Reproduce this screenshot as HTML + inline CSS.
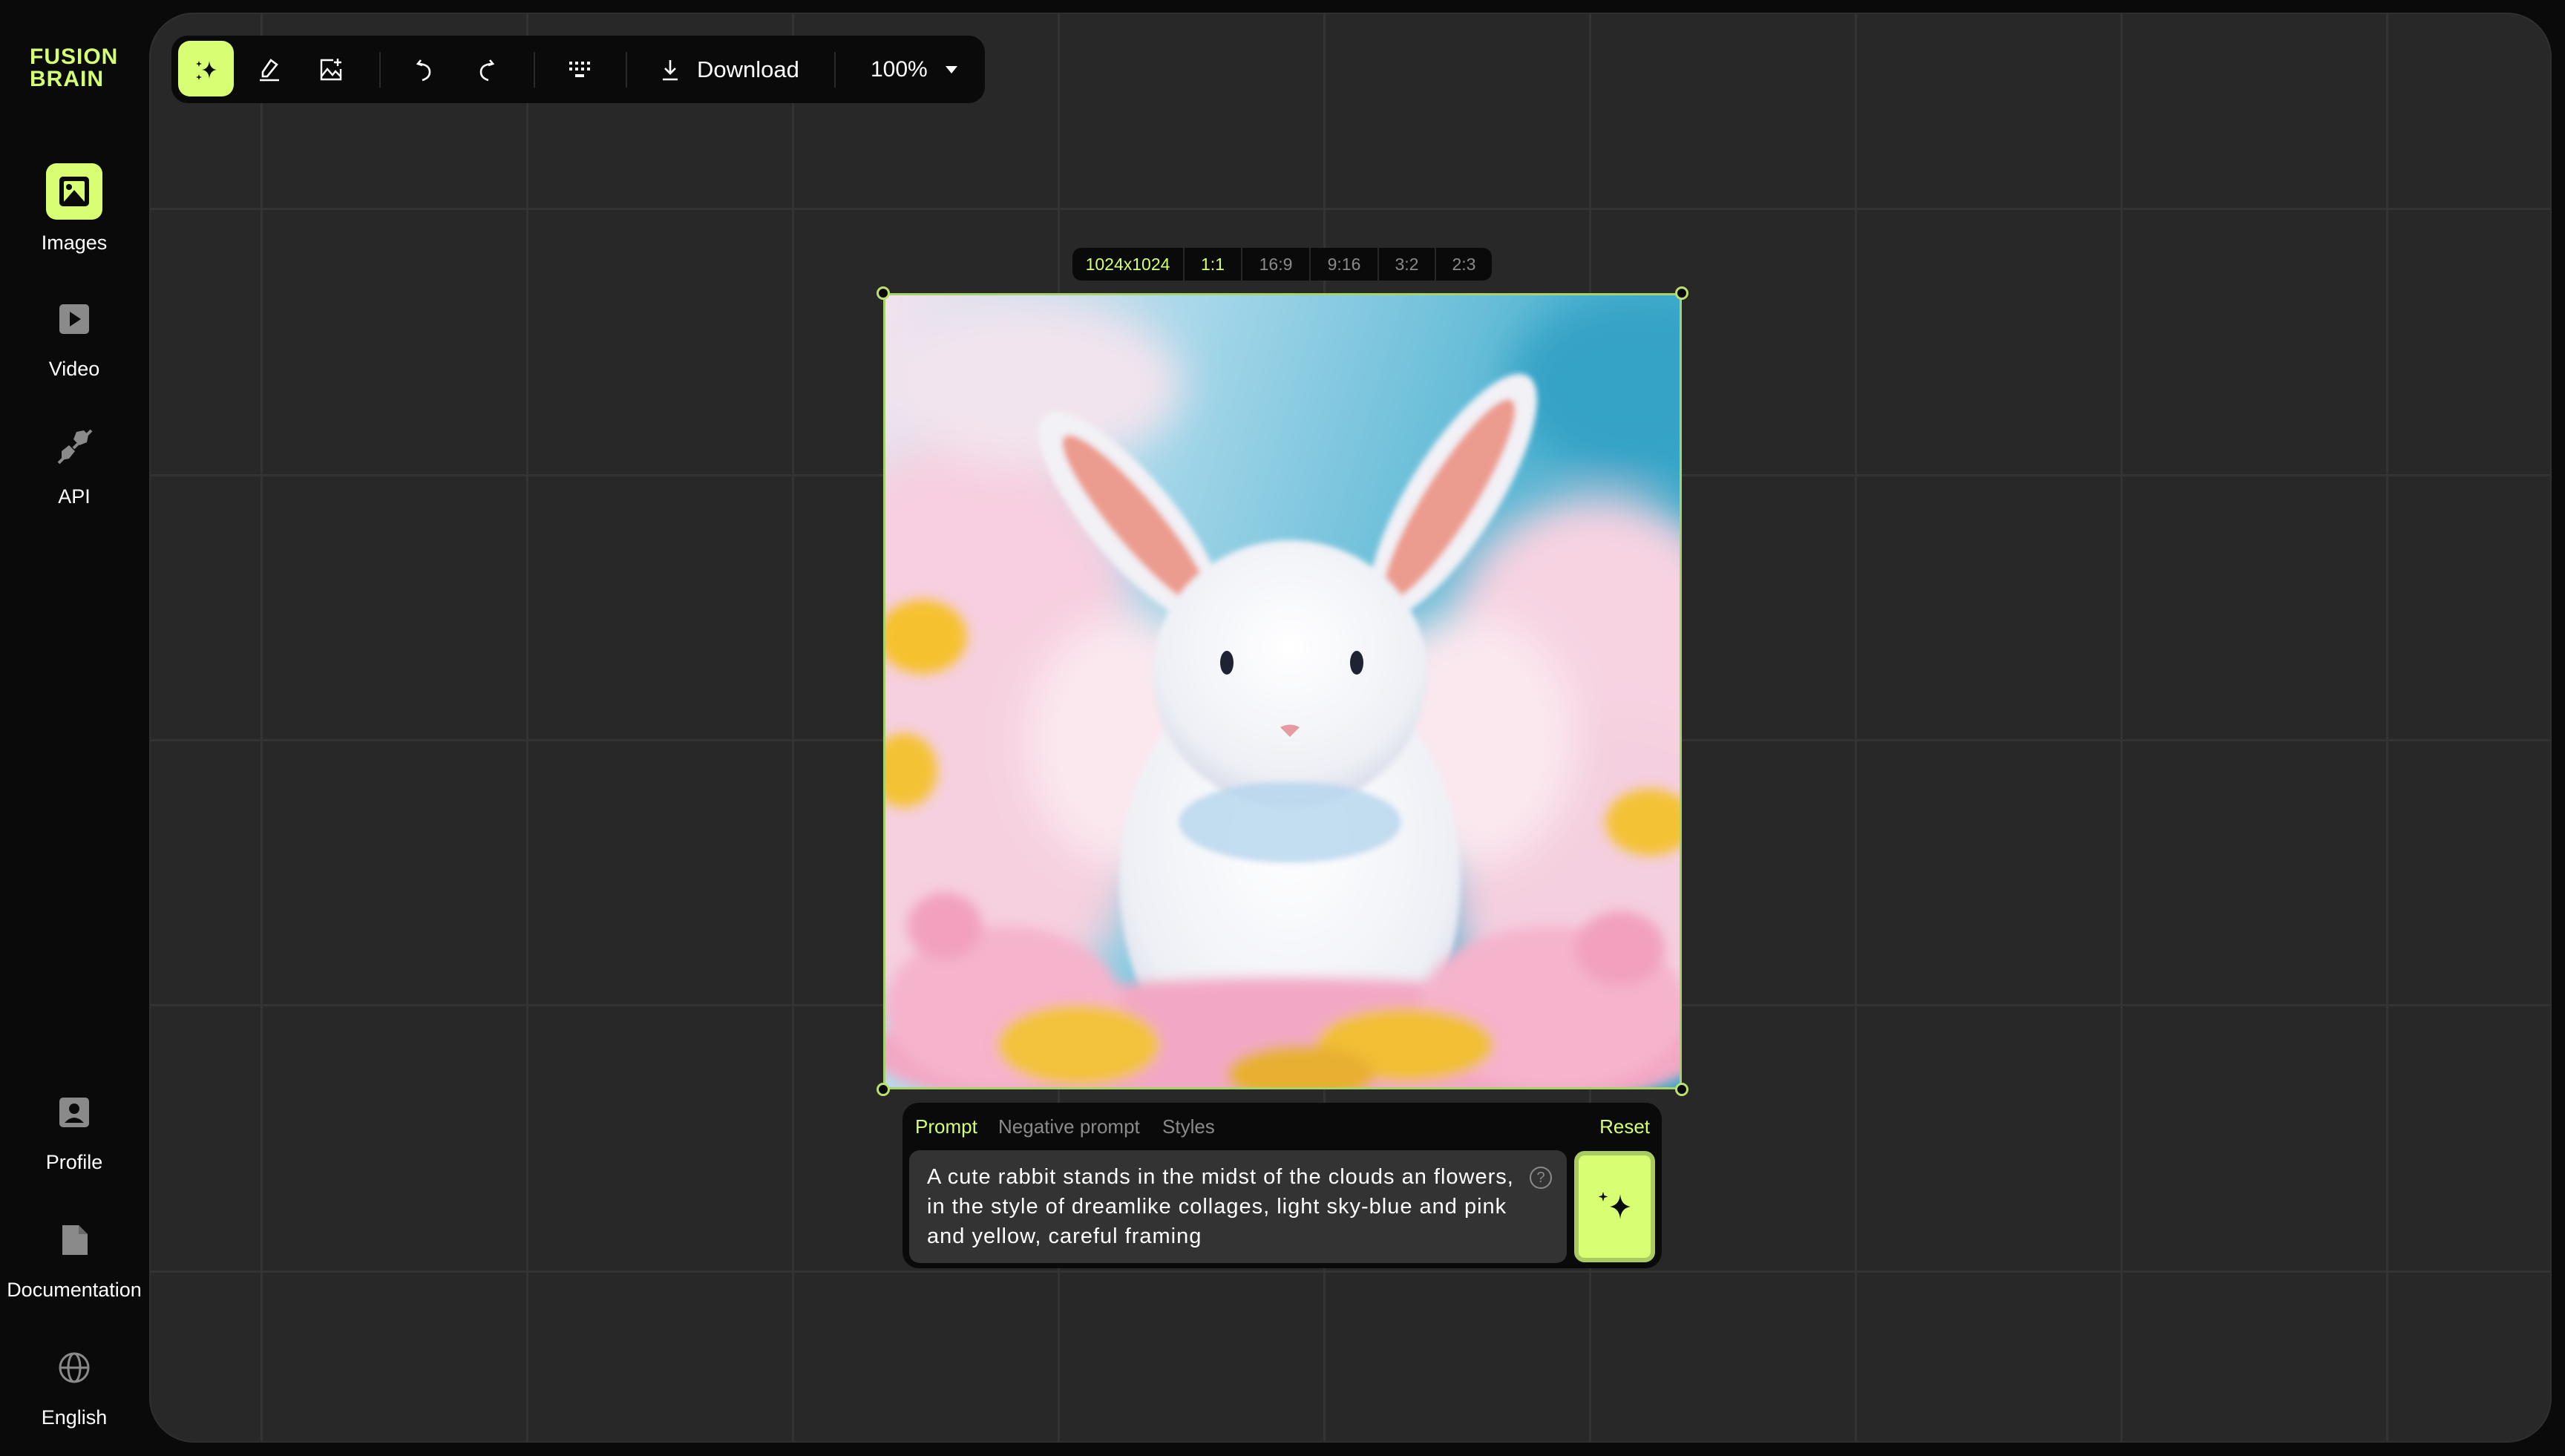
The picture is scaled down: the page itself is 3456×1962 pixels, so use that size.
<!DOCTYPE html>
<html><head><meta charset="utf-8">
<style>
*{margin:0;padding:0;box-sizing:border-box}
html,body{width:3456px;height:1962px;overflow:hidden;background:#0a0a0a;font-family:"Liberation Sans",sans-serif;color:#fff}
.panel{position:absolute;left:201px;top:17px;width:3237px;height:1927px;border-radius:60px;background-color:#282828;
background-image:linear-gradient(90deg,transparent 148px,#333 148px,#333 151px,transparent 151px);
background-size:358px 100%;background-position:0 0;overflow:hidden;border:2px solid #2f2f2f}
.hl{position:absolute;left:0;right:0;height:3px;background:#333}
.logo{position:absolute;left:40px;top:62px;color:#d4ff73;font-weight:bold;font-size:30px;line-height:30px;letter-spacing:1px}
.nav{position:absolute;left:0;width:200px;text-align:center;font-size:27px;color:#fff}
.nav svg{display:block;margin:0 auto}
.toolbar{position:absolute;left:231px;top:48px;width:1096px;height:91px;background:#0a0a0a;border-radius:22px}
.tb{position:absolute;top:0;height:91px;display:flex;align-items:center;justify-content:center}
.sep{position:absolute;top:22px;width:2px;height:48px;background:#2a2a2a}
.active{position:absolute;left:9px;top:7px;width:75px;height:75px;background:#d8ff73;border-radius:16px}
.ratio{position:absolute;left:1445px;top:334px;width:565px;height:44px;background:#0a0a0a;border-radius:12px;font-size:23px}
.ratio span{position:absolute;top:0;height:44px;line-height:44px;text-align:center;color:#8a8a8a}
.ratio i{position:absolute;top:0;width:2px;height:44px;background:#282828}
.img{position:absolute;left:1190px;top:395px;width:1076px;height:1073px;border:3px solid #a6d46a;overflow:hidden}
.h{position:absolute;width:18px;height:18px;border-radius:50%;background:#0a0a0a;border:3px solid #b9e070}
.prompt{position:absolute;left:1216px;top:1486px;width:1023px;height:223px;background:#0a0a0a;border-radius:22px}
.ta{position:absolute;left:9px;top:64px;width:886px;height:152px;background:#333;border-radius:14px}
.gen{position:absolute;left:905px;top:65px;width:109px;height:150px;background:#d8ff73;border:6px solid #a9cc62;border-radius:14px}
</style></head><body>
<div class="logo">FUSION<br>BRAIN</div>

<div class="nav" style="top:220px">
<div style="width:76px;height:76px;background:#d8ff73;border-radius:14px;margin:0 auto;position:relative">
<svg width="76" height="76" viewBox="0 0 76 76"><rect x="18" y="18" width="40" height="40" rx="5" fill="#0a0a0a"/><rect x="24" y="24" width="28" height="28" rx="2" fill="#d8ff73"/><circle cx="31" cy="32" r="4" fill="#0a0a0a"/><path d="M24 52 L38 36 L52 52 Z" fill="#0a0a0a"/></svg></div>
<div style="margin-top:16px">Images</div></div>

<div class="nav" style="top:408px">
<svg width="44" height="44" viewBox="0 0 44 44"><rect x="2" y="2" width="40" height="40" rx="5" fill="#8a8a8a"/><path d="M16 12 L31 22 L16 32Z" fill="#0a0a0a"/></svg>
<div style="margin-top:30px">Video</div></div>

<div class="nav" style="top:578px">
<svg width="50" height="48" viewBox="0 0 50 48"><path d="M28 4 l10 -2 l6 6 l-2 10 l-10 4 l-8 -8z" fill="#8a8a8a"/><path d="M8 30 l10 -8 l8 8 l-8 10 l-10 2z" fill="#8a8a8a"/><path d="M4 46 l8 -8 M40 10 l8-8 M24 26 l6-6" stroke="#8a8a8a" stroke-width="4"/></svg>
<div style="margin-top:28px">API</div></div>

<div class="nav" style="top:1477px">
<svg width="44" height="44" viewBox="0 0 44 44"><rect x="2" y="2" width="40" height="40" rx="5" fill="#8a8a8a"/><circle cx="22" cy="17" r="7" fill="#0a0a0a"/><path d="M9 36 q13 -14 26 0z" fill="#0a0a0a"/></svg>
<div style="margin-top:30px">Profile</div></div>

<div class="nav" style="top:1649px">
<svg width="40" height="44" viewBox="0 0 40 44"><path d="M4 2 H26 L38 14 V42 H4Z" fill="#8a8a8a"/><path d="M26 2 V14 H38" fill="#6a6a6a"/></svg>
<div style="margin-top:30px">Documentation</div></div>

<div class="nav" style="top:1821px">
<svg width="44" height="44" viewBox="0 0 44 44" fill="none" stroke="#8a8a8a" stroke-width="3"><circle cx="22" cy="22" r="19"/><ellipse cx="22" cy="22" rx="8" ry="19"/><path d="M3 22 H41"/></svg>
<div style="margin-top:30px">English</div></div>

<div class="panel">
<div class="hl" style="top:261px"></div><div class="hl" style="top:620px"></div><div class="hl" style="top:977px"></div><div class="hl" style="top:1334px"></div><div class="hl" style="top:1693px"></div>
</div>

<div class="toolbar">
<div class="active"></div>
<div class="tb" style="left:9px;width:75px"><svg width="36" height="36" viewBox="0 0 36 36"><path d="M22 6 Q23 17 32 18 Q23 19 22 30 Q21 19 12 18 Q21 17 22 6Z" fill="#0a0a0a"/><path d="M8 6 l1 3 l3 1 l-3 1 l-1 3 l-1 -3 l-3 -1 l3 -1z M8 24 l1 3 l3 1 l-3 1 l-1 3 l-1-3 l-3-1 l3-1z" fill="#0a0a0a"/></svg></div>
<div class="tb" style="left:104px;width:55px"><svg width="32" height="34" viewBox="0 0 32 34" fill="none" stroke="#fff" stroke-width="2.6"><path d="M18 4 L26 10 L13 26 H7 V20 Z"/><path d="M3 31 H29"/></svg></div>
<div class="tb" style="left:187px;width:55px"><svg width="32" height="34" viewBox="0 0 32 34" fill="none" stroke="#fff" stroke-width="2.4"><path d="M19 4 H3 V30 H29 V16"/><path d="M3 26 L11 16 L18 24 L22 19 L29 26"/><path d="M25 2 V12 M20 7 H30"/></svg></div>
<div class="sep" style="left:280px"></div>
<div class="tb" style="left:313px;width:55px"><svg width="26" height="34" viewBox="0 0 26 34" fill="none" stroke="#fff" stroke-width="2.6"><path d="M8 4 L4 9 L10 11"/><path d="M5 9 Q20 10 20 20 Q20 28 10 31"/></svg></div>
<div class="tb" style="left:396px;width:55px"><svg width="26" height="34" viewBox="0 0 26 34" fill="none" stroke="#fff" stroke-width="2.6"><path d="M18 4 L22 9 L16 11"/><path d="M21 9 Q6 10 6 20 Q6 28 16 31"/></svg></div>
<div class="sep" style="left:488px"></div>
<div class="tb" style="left:522px;width:55px"><svg width="32" height="26" viewBox="0 0 32 26" fill="#fff"><rect x="2" y="2" width="4" height="4"/><rect x="10" y="2" width="4" height="4"/><rect x="18" y="2" width="4" height="4"/><rect x="26" y="2" width="4" height="4"/><rect x="2" y="10" width="4" height="4"/><rect x="10" y="10" width="4" height="4"/><rect x="18" y="10" width="4" height="4"/><rect x="26" y="10" width="4" height="4"/><rect x="10" y="19" width="12" height="4"/></svg></div>
<div class="sep" style="left:612px"></div>
<div class="tb" style="left:660px;width:320px;justify-content:flex-start;font-size:31px"><svg width="24" height="32" viewBox="0 0 24 32" fill="none" stroke="#fff" stroke-width="2.6" style="margin-right:24px"><path d="M12 3 V21 M5 14 L12 21 L19 14 M2 29 H22"/></svg>Download</div>
<div class="sep" style="left:893px"></div>
<div class="tb" style="left:942px;width:150px;justify-content:flex-start;font-size:30px">100%<svg width="20" height="14" viewBox="0 0 20 14" style="margin-left:22px"><path d="M2 2 H18 L10 12Z" fill="#fff"/></svg></div>
</div>

<div class="ratio">
<span style="left:0;width:149px;color:#d4ff73">1024x1024</span><i style="left:149px"></i>
<span style="left:151px;width:76px;color:#d4ff73">1:1</span><i style="left:227px"></i>
<span style="left:229px;width:90px">16:9</span><i style="left:319px"></i>
<span style="left:321px;width:90px">9:16</span><i style="left:411px"></i>
<span style="left:413px;width:75px">3:2</span><i style="left:488px"></i>
<span style="left:490px;width:75px">2:3</span>
</div>

<div class="img">
<svg width="1076" height="1073" viewBox="0 0 1076 1073">
<defs>
<linearGradient id="sky" x1="0" y1="0" x2="1" y2="0.3"><stop offset="0" stop-color="#f3e3ee"/><stop offset="0.35" stop-color="#a9d8ea"/><stop offset="1" stop-color="#2fa6c8"/></linearGradient>
<filter id="b1"><feGaussianBlur stdDeviation="28"/></filter>
<filter id="b2"><feGaussianBlur stdDeviation="8"/></filter>
<filter id="b3"><feGaussianBlur stdDeviation="4"/></filter>
<radialGradient id="fur" cx="0.5" cy="0.4" r="0.6"><stop offset="0" stop-color="#ffffff"/><stop offset="0.8" stop-color="#eef0f6"/><stop offset="1" stop-color="#d8dbe8"/></radialGradient>
</defs>
<rect width="1076" height="1073" fill="url(#sky)"/>
<g filter="url(#b1)">
<ellipse cx="110" cy="420" rx="220" ry="220" fill="#f7cfe0"/>
<ellipse cx="100" cy="720" rx="240" ry="260" fill="#f6d0df"/>
<ellipse cx="960" cy="500" rx="210" ry="230" fill="#f7d3e2"/>
<ellipse cx="980" cy="800" rx="220" ry="240" fill="#f4cfdf"/>
<ellipse cx="330" cy="600" rx="140" ry="170" fill="#fbe8ef"/>
<ellipse cx="780" cy="600" rx="150" ry="170" fill="#fbe8ef"/>
<ellipse cx="200" cy="120" rx="200" ry="110" fill="#f2e4ee"/>
<ellipse cx="1000" cy="120" rx="160" ry="120" fill="#35a3c6"/>
</g>
<g filter="url(#b3)">
<ellipse cx="545" cy="790" rx="230" ry="300" fill="url(#fur)"/>
<ellipse cx="330" cy="300" rx="58" ry="180" transform="rotate(-40 330 300)" fill="#f2f1f6"/>
<ellipse cx="338" cy="305" rx="32" ry="150" transform="rotate(-40 338 305)" fill="#ec9c8e"/>
<ellipse cx="765" cy="270" rx="60" ry="190" transform="rotate(32 765 270)" fill="#f2f1f6"/>
<ellipse cx="760" cy="275" rx="34" ry="158" transform="rotate(32 760 275)" fill="#ec9c8e"/>
<ellipse cx="545" cy="510" rx="185" ry="180" fill="url(#fur)"/>
<ellipse cx="545" cy="710" rx="150" ry="55" fill="#b5d6ee" opacity="0.8"/>
</g>
<ellipse cx="460" cy="495" rx="9" ry="16" fill="#1d2333"/>
<ellipse cx="635" cy="495" rx="9" ry="16" fill="#1d2333"/>
<path d="M532 582 Q545 575 558 582 L545 595Z" fill="#e79aa0"/>
<g filter="url(#b2)">
<ellipse cx="540" cy="1020" rx="560" ry="100" fill="#f2a8c4"/>
<ellipse cx="160" cy="960" rx="160" ry="110" fill="#f5b3cc"/>
<ellipse cx="900" cy="960" rx="180" ry="110" fill="#f5b3cc"/>
<ellipse cx="260" cy="1010" rx="110" ry="55" fill="#f3c33c"/>
<ellipse cx="700" cy="1010" rx="120" ry="50" fill="#f2bf35"/>
<ellipse cx="560" cy="1050" rx="100" ry="40" fill="#e8b030"/>
<ellipse cx="50" cy="460" rx="60" ry="50" fill="#f6c12d"/>
<ellipse cx="25" cy="640" rx="45" ry="50" fill="#f4c236"/>
<ellipse cx="1030" cy="710" rx="60" ry="45" fill="#f4c236"/>
<ellipse cx="80" cy="850" rx="50" ry="45" fill="#f2a0bd"/>
<ellipse cx="990" cy="880" rx="60" ry="50" fill="#f2a0bd"/>
</g>
</svg>
</div>
<div class="h" style="left:1181px;top:386px"></div>
<div class="h" style="left:2257px;top:386px"></div>
<div class="h" style="left:1181px;top:1459px"></div>
<div class="h" style="left:2257px;top:1459px"></div>

<div class="prompt">
<div style="position:absolute;left:17px;top:17px;font-size:26px;line-height:30px;color:#d4ff73">Prompt</div>
<div style="position:absolute;left:129px;top:17px;font-size:26px;line-height:30px;color:#8a8a8a">Negative prompt</div>
<div style="position:absolute;left:350px;top:17px;font-size:26px;line-height:30px;color:#8a8a8a">Styles</div>
<div style="position:absolute;right:16px;top:17px;font-size:26px;line-height:30px;color:#d4ff73">Reset</div>
<div class="ta">
<div style="position:absolute;left:24px;top:16px;font-size:29px;line-height:40px;letter-spacing:1px;white-space:nowrap;color:#fff">A cute rabbit stands in the midst of the clouds an flowers,<br>in the style of dreamlike collages, light sky-blue and pink<br>and yellow, careful framing</div>
<div style="position:absolute;left:836px;top:22px;width:30px;height:30px;border:2px solid #8a8a8a;border-radius:50%;color:#8a8a8a;font-size:20px;line-height:26px;text-align:center">?</div>
</div>
<div class="gen"><svg width="97" height="138" viewBox="0 0 97 138"><path d="M56 52 Q57 67 70 69 Q57 71 56 86 Q55 71 42 69 Q55 67 56 52Z" fill="#0a0a0a"/><path d="M33 49 l1.5 5 l5 1.5 l-5 1.5 l-1.5 5 l-1.5 -5 l-5 -1.5 l5 -1.5z" fill="#0a0a0a"/></svg></div>
</div>
</body></html>
